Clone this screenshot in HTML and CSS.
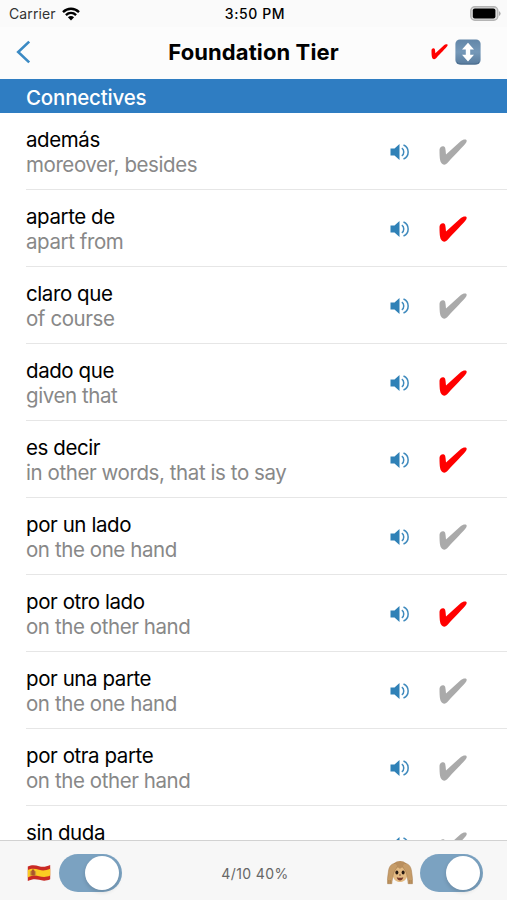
FILE: index.html
```html
<!DOCTYPE html>
<html lang="en">

<head>
    <meta charset="UTF-8">
    <meta name="viewport" content="width=device-width, initial-scale=1.0">
    <title>Foundation Tier</title>
    <link rel="stylesheet" href="styles.css">
</head>

<body>
    <svg class="defs" width="0" height="0">
        <symbol id="check" viewBox="0 0 28 27">
            <path d="M.5 10.8C.5 8.7 2.4 7.1 4.3 7.3 6.6 7.5 6.5 10.4 7 15.4L21.6 2.2C23.5.5 25.6.3 26.8.6 27.9 1 28 2.3 27.2 3.4 24.6 7.3 15.2 16 9.1 23.2 7.4 25.4 5.4 26.2 3.8 25.3 1 23.8.5 19.8.5 10.8Z" />
        </symbol>
        <symbol id="sound" viewBox="0 0 20 18">
            <path d="M.5 5.5H4.5L9.5 1V17L4.5 12.5H.5Z" fill="#2f81b7" />
            <path d="M11.8 5.2C14.4 6.7 14.4 11.3 11.8 12.8M13.5 2C19.7 4.6 19.7 13.4 13.5 16" fill="none" stroke="#3f8abd" stroke-width="1.5" />
        </symbol>
    </svg>

    <div class="app">
        <div class="status">
            <div class="carrier">
                <span>Carrier</span>
                <svg class="wifi" viewBox="0 0 18 14">
                    <path d="M1 5.1C5.6.7 12.4.7 17 5.1M3.9 8.1C6.9 5.3 11.1 5.3 14.1 8.1" fill="none" stroke="#000" stroke-width="2.4" />
                    <path d="M5.9 10.3Q9 7.7 12.1 10.3L9 13.5Z" />
                </svg>
            </div>
            <span class="time">3:50 PM</span>
            <svg class="battery" viewBox="0 0 31 15">
                <rect x=".8" y=".8" width="27" height="13.4" rx="4" fill="#ddd" stroke="#b4b4b4" stroke-width="1.4" />
                <rect x="2.8" y="2.6" width="22.6" height="9.8" rx="2" />
                <path d="M29 5Q30.6 6 30.6 7.5T29 10Z" fill="#aaa" />
            </svg>
        </div>

        <div class="navbar">
            <svg class="back" viewBox="0 0 16 24">
                <path d="M13.2 1.6 2.2 12 13.2 22.4" />
            </svg>
            <h1 class="title">Foundation Tier</h1>
            <div class="tools">
                <svg class="check small on"><use href="#check" /></svg>
                <svg class="sort" viewBox="0 0 26 26">
                    <defs>
                        <linearGradient id="key" x2="0" y2="1">
                            <stop offset="0" stop-color="#6286a8" />
                            <stop offset=".5" stop-color="#7598b8" />
                            <stop offset="1" stop-color="#587b9d" />
                        </linearGradient>
                    </defs>
                    <rect x=".4" y=".4" width="25.2" height="25.2" rx="4.5" fill="url(#key)" />
                    <path d="M2 23Q3 25 6 25H20Q23 25 24 23" fill="none" stroke="#4b6c8c" />
                    <path d="M13 3.7 19 10.4H15.2V15.8H19L13 22.5 7 15.8H10.8V10.4H7Z" fill="#fff" />
                </svg>
            </div>
        </div>

        <h2 class="section">Connectives</h2>

        <ul class="list">
            <li class="item">
                <div class="words">
                    <p class="word">además</p>
                    <p class="meaning">moreover, besides</p>
                </div>
                <svg class="sound"><use href="#sound" /></svg>
                <svg class="check"><use href="#check" /></svg>
            </li>
            <li class="item">
                <div class="words">
                    <p class="word">aparte de</p>
                    <p class="meaning">apart from</p>
                </div>
                <svg class="sound"><use href="#sound" /></svg>
                <svg class="check on"><use href="#check" /></svg>
            </li>
            <li class="item">
                <div class="words">
                    <p class="word">claro que</p>
                    <p class="meaning">of course</p>
                </div>
                <svg class="sound"><use href="#sound" /></svg>
                <svg class="check"><use href="#check" /></svg>
            </li>
            <li class="item">
                <div class="words">
                    <p class="word">dado que</p>
                    <p class="meaning">given that</p>
                </div>
                <svg class="sound"><use href="#sound" /></svg>
                <svg class="check on"><use href="#check" /></svg>
            </li>
            <li class="item">
                <div class="words">
                    <p class="word">es decir</p>
                    <p class="meaning">in other words, that is to say</p>
                </div>
                <svg class="sound"><use href="#sound" /></svg>
                <svg class="check on"><use href="#check" /></svg>
            </li>
            <li class="item">
                <div class="words">
                    <p class="word">por un lado</p>
                    <p class="meaning">on the one hand</p>
                </div>
                <svg class="sound"><use href="#sound" /></svg>
                <svg class="check"><use href="#check" /></svg>
            </li>
            <li class="item">
                <div class="words">
                    <p class="word">por otro lado</p>
                    <p class="meaning">on the other hand</p>
                </div>
                <svg class="sound"><use href="#sound" /></svg>
                <svg class="check on"><use href="#check" /></svg>
            </li>
            <li class="item">
                <div class="words">
                    <p class="word">por una parte</p>
                    <p class="meaning">on the one hand</p>
                </div>
                <svg class="sound"><use href="#sound" /></svg>
                <svg class="check"><use href="#check" /></svg>
            </li>
            <li class="item">
                <div class="words">
                    <p class="word">por otra parte</p>
                    <p class="meaning">on the other hand</p>
                </div>
                <svg class="sound"><use href="#sound" /></svg>
                <svg class="check"><use href="#check" /></svg>
            </li>
            <li class="item">
                <div class="words">
                    <p class="word">sin duda</p>
                </div>
                <svg class="sound"><use href="#sound" /></svg>
                <svg class="check"><use href="#check" /></svg>
            </li>
        </ul>

        <div class="toolbar">
            <div class="option">
                <svg class="flag" viewBox="0 0 24 18">
                    <path d="M.8 2.6C5 .4 8.5 1.2 12 2.2S19 3 23.2 1V15.2C19 17.2 15.5 16.8 12 15.8S5 15 .8 17Z" fill="#c92a25" />
                    <path d="M.8 6C5 4 8.5 4.8 12 5.8S19 6.6 23.2 4.7V11.6C19 13.6 15.5 13.2 12 12.2S5 11.4 .8 13.4Z" fill="#fbcb22" />
                    <path d="M4.2 7.4Q5 5.2 6 5.2T7.9 7.4V11.6H4.2Z" fill="#a9552d" />
                    <path d="M3.4 7.2V11.5M8.6 7.2V11.5" stroke="#b98a45" stroke-width=".8" />
                </svg>
                <span class="switch"></span>
            </div>
            <span class="score">4/10 40%</span>
            <div class="option">
                <svg class="monkey" viewBox="0 0 26 25">
                    <path d="M4 9Q6 1.2 13 1T22 9L20 17H6Z" fill="#b98f5e" />
                    <path d="M6.4 11C6.4 7.5 10.8 6.3 13 9 15.2 6.3 19.6 7.5 19.6 11 19.6 13 20.4 14 20 16.5 19 20.6 16 22 13 22S7 20.6 6 16.5C5.6 14 6.4 13 6.4 11Z" fill="#e3ba83" />
                    <path d="M8.5 3.4C4.4 3.4 2 6.5 1.5 11 1 15 .2 18.5.5 23.7H4.9C5 20.5 5.4 19.5 6 16 6.3 11 9.2 9.7 10.4 6.4M17.5 3.4C21.6 3.4 24 6.5 24.5 11 25 15 25.8 18.5 25.5 23.7H21.1C21 20.5 20.6 19.5 20 16 19.7 11 16.8 9.7 15.6 6.4" fill="#c69c68" stroke="#a47b4d" stroke-width=".5" />
                    <path d="M1.8 20V23.6M3.4 20V23.6M22.6 20V23.6M24.2 20V23.6" stroke="#94703f" stroke-width=".5" />
                    <ellipse cx="9.9" cy="12.6" rx="1.5" ry="2" fill="#241710" />
                    <ellipse cx="16.1" cy="12.6" rx="1.5" ry="2" fill="#241710" />
                    <path d="M12.2 15H13.8" stroke="#67432a" />
                    <path d="M9.7 17.2Q13 18.4 16.3 17.2 15.3 20.4 13 20.4T9.7 17.2Z" fill="#76382b" />
                </svg>
                <span class="switch"></span>
            </div>
        </div>
    </div>
</body>

</html>
```

FILE: styles.css
```css
* {
    margin: 0;
    padding: 0;
    box-sizing: border-box;
}

body {
    font-family: Inter, "Liberation Sans", sans-serif;
    color: #000;
    background-color: #fff;
}

li {
    list-style-type: none;
}

svg {
    display: block;
    flex: none;
}

.defs {
    display: none;
}

.app {
    width: 507px;
    height: 900px;
    overflow: hidden;
    display: flex;
    flex-direction: column;
}

.status {
    height: 27px;
    flex: none;
    display: grid;
    grid-template-columns: 1fr auto 1fr;
    align-items: center;
    padding: 0 6px 0 9px;
    background-color: #fafafa;
    font-size: 14px;
}

.carrier {
    display: flex;
    align-items: center;
    gap: 6px;
    color: #333;
    letter-spacing: .1px;
}

.wifi {
    width: 18px;
    height: 14px;
}

.time {
    font-weight: 500;
    letter-spacing: .6px;
}

.battery {
    width: 31px;
    height: 15px;
    justify-self: end;
}

.navbar {
    height: 52px;
    flex: none;
    display: grid;
    grid-template-columns: 1fr auto 1fr;
    align-items: center;
    padding: 0 26px 2px 16px;
    background-color: #fcfcfc;
}

.back {
    width: 16px;
    height: 24px;
    fill: none;
    stroke: #3b8ac4;
    stroke-width: 2.6;
}

.title {
    padding-left: 10px;
    font-size: 22px;
    font-weight: 700;
    letter-spacing: .1px;
}

.tools {
    display: flex;
    align-items: center;
    justify-content: flex-end;
    gap: 7px;
}

.sort {
    width: 26px;
    height: 26px;
}

.section {
    height: 34px;
    flex: none;
    padding-left: 26px;
    line-height: 37px;
    font-size: 20.5px;
    font-weight: 500;
    letter-spacing: -.2px;
    color: #fff;
    background-color: #2f7dc2;
}

.list {
    flex: 1;
    min-height: 0;
    overflow: hidden;
}

.item {
    height: 77px;
    margin-left: 26px;
    padding: 2px 40px 0 0;
    display: flex;
    align-items: center;
    border-bottom: 1px solid #e6e6e6;
}

.words {
    flex: 1;
    height: 50px;
    line-height: 25px;
    font-size: 20.5px;
    letter-spacing: -.42px;
}

.meaning {
    color: #888;
}

.sound {
    width: 20px;
    height: 18px;
    margin-right: 29px;
}

.check {
    width: 28px;
    height: 27px;
    fill: #aaa;
}

.on {
    fill: #f00;
}

.small {
    width: 17px;
    height: 16px;
}

.toolbar {
    height: 60px;
    flex: none;
    display: grid;
    grid-template-columns: 1fr auto 1fr;
    align-items: center;
    padding: 5px 24px 1px 27px;
    border-top: 1px solid #d2d2d2;
    background-color: #f7f7f7;
}

.option {
    display: flex;
    align-items: center;
    gap: 8px;
}

.option:last-child {
    justify-content: flex-end;
    gap: 7px;
}

.flag {
    width: 24px;
    height: 18px;
}

.monkey {
    width: 26px;
    height: 25px;
}

.switch {
    width: 63px;
    height: 38px;
    padding: 2px 3px;
    border-radius: 19px;
    background-color: #7ba2c1;
    display: flex;
    justify-content: flex-end;
}

.switch::after {
    content: '';
    width: 34px;
    height: 34px;
    border-radius: 50%;
    background-color: #fff;
    box-shadow: 0 2px 4px rgba(0, 0, 0, .15);
}

.score {
    padding-top: 1px;
    font-size: 14px;
    letter-spacing: .4px;
    color: #666;
}
```
